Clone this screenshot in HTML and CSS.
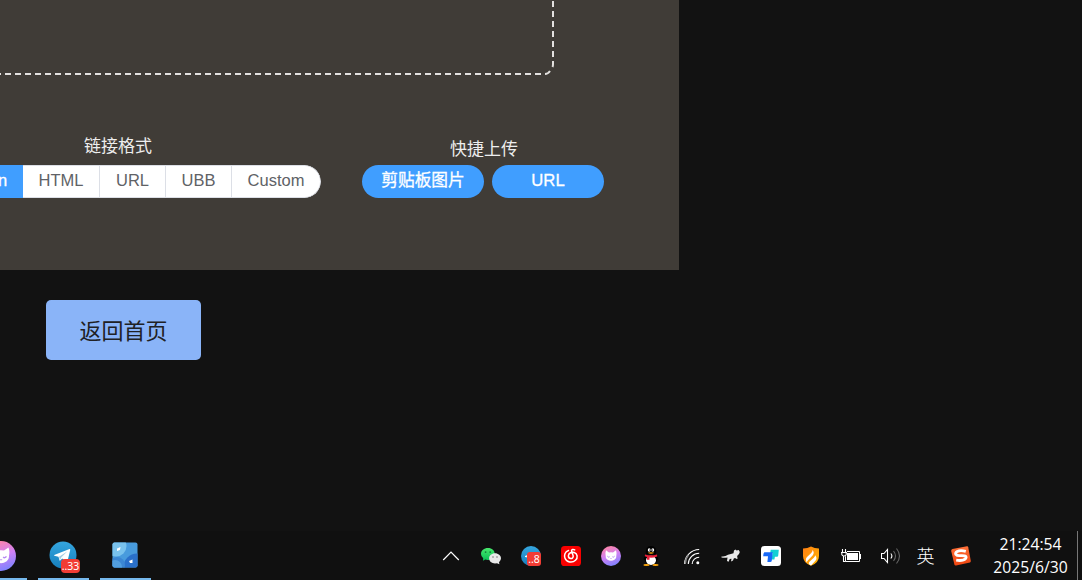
FILE: index.html
```
<!DOCTYPE html>
<html lang="zh-CN">
<head>
<meta charset="utf-8">
<title>PicGo</title>
<link rel="stylesheet" href="styles.css">
</head>
<body>
<div class="screen">
  <main class="page">
    <section class="panel">
      <svg class="dropzone" width="554" height="75" viewBox="0 0 554 75"><path class="dashes" d="M553 1V58M541 74H0"/><path d="M553 61V64Q553 66 552.5 67M550 71Q548 74 545 74"/></svg>
      <div class="options">
        <div class="group formats">
          <div class="label">链接格式</div>
          <div class="segments">
            <span class="seg active">n</span><span class="seg html">HTML</span><span class="seg">URL</span><span class="seg">UBB</span><span class="seg last">Custom</span>
          </div>
        </div>
        <div class="group quick">
          <div class="label low">快捷上传</div>
          <div class="buttons"><span class="pill wide">剪贴板图片</span><span class="pill">URL</span></div>
        </div>
      </div>
    </section>
    <div class="home">返回首页</div>
  </main>
  <footer class="taskbar">
    <svg width="0" height="0" class="defs"><defs>
      <linearGradient id="cat" x1="0.3" y1="0" x2="0.65" y2="1"><stop offset="0" stop-color="#ff85a5"/><stop offset=".5" stop-color="#cf80f5"/><stop offset="1" stop-color="#7b83ff"/></linearGradient>
      <linearGradient id="tg" x1="0" y1="0" x2="0" y2="1"><stop offset="0" stop-color="#35a6df"/><stop offset="1" stop-color="#167fbd"/></linearGradient>
      <linearGradient id="fire" x1="0" y1="0" x2="1" y2="1"><stop offset="0" stop-color="#ff7d14"/><stop offset="1" stop-color="#ffb800"/></linearGradient>
      <linearGradient id="wx" x1="0" y1="0" x2="0" y2="1"><stop offset="0" stop-color="#48e86c"/><stop offset="1" stop-color="#08bd56"/></linearGradient>
      <linearGradient id="sg" x1="0" y1="0" x2="0" y2="1"><stop offset="0" stop-color="#ff7038"/><stop offset="1" stop-color="#ee4611"/></linearGradient>
      <symbol id="catface" viewBox="0 0 20 20"><circle cx="10" cy="10" r="10" fill="url(#cat)"/><path d="M5 4.3L8 6.4Q10 6 12 6.4L15 4.3Q16 7 15.3 10Q15.6 12 13.8 13.5Q10 16 6.2 13.5Q4.4 12 4.7 10Q4 7 5 4.3Z" fill="#fff"/><path d="M6.4 10.2Q7.4 11.7 8.6 10.8M11.4 10.8Q12.6 11.7 13.6 10.2" fill="none" stroke="#b68af2" stroke-width="1"/><path d="M9.2 12.5H10.8" stroke="#c0a0ef" stroke-width=".7"/></symbol>
    </defs></svg>
    <div class="apps">
      <div class="app first"><svg width="30" height="30"><use href="#catface"/></svg></div>
      <div class="app">
        <svg width="28" height="28" viewBox="0 0 28 28"><circle cx="14" cy="14" r="13.5" fill="url(#tg)"/><path d="M5.2 14L20.5 8Q21.4 7.8 21.2 8.9L18.5 20.2Q18.2 21.3 17.2 20.6L13.2 17.6L11.2 19.5Q10.5 20 10.4 19L9.5 15.8L5.2 14.8Z" fill="#fff"/><path d="M10 15.8L18.5 10.3L12.2 16.5L11 19" fill="#a9cfe4"/></svg>
        <span class="badge">..33</span>
      </div>
      <div class="app">
        <svg width="26" height="26" viewBox="0 0 26 26"><defs><clipPath id="tile"><rect x=".5" y=".5" width="25" height="25" rx="2"/></clipPath></defs><g clip-path="url(#tile)"><rect width="26" height="26" fill="#489bdd"/><circle cx="4" cy="4" r="10.5" fill="#79c2ed"/><circle cx="25" cy="25" r="13.5" fill="#2a70ca"/><circle cx="5" cy="23" r="8" fill="#3b86d3"/><circle cx="3" cy="25" r="7" fill="#529fdf"/><path d="M5 6.5L8.5 5L8 8L5 9ZM17 19L20.5 17.5V21L18 21Z" fill="#fff"/></g></svg>
      </div>
    </div>
    <div class="tray">
      <div class="cell"><svg width="20" height="20" viewBox="0 0 20 20"><path d="M2.2 14L10 6.2L17.8 14" fill="none" stroke="#fff" stroke-width="1.2"/></svg></div>
      <div class="cell"><svg width="20" height="20" viewBox="0 0 20 20"><path d="M7 2C3 2 0 4.5 0 8Q0 10.6 2.2 12.3L2 14.8L4.3 13.6Q7 14.3 9.5 13.4C12.5 12.5 13.7 10 13.7 8C13.7 4.5 11 2 7 2Z" fill="url(#wx)"/><circle cx="4.6" cy="6.1" r=".9" fill="#137a3b"/><circle cx="9.2" cy="6.1" r=".9" fill="#137a3b"/><path d="M14 7.2C10.7 7.2 8.1 9.5 8.1 12.3S10.7 17.5 14 17.5L16 17.2L18.4 18.3L18 16.2Q20 14.8 20 12.3C20 9.5 17.3 7.2 14 7.2Z" fill="#e8e8e8"/><circle cx="12" cy="11" r=".8" fill="#777"/><circle cx="16" cy="11" r=".8" fill="#777"/></svg></div>
      <div class="cell"><svg width="20" height="20" viewBox="0 0 20 20"><circle cx="10" cy="10" r="10" fill="url(#tg)"/><path d="M4 10L9 8V12L4 11Z" fill="#fff"/></svg><span class="badge small">..8</span></div>
      <div class="cell"><svg width="20" height="20" viewBox="0 0 20 20"><rect width="20" height="20" rx="3.6" fill="#f90000"/><path d="M7.5 4.5C3.8 5.8 2.9 9.4 4 12.2C5.6 16.5 11.3 17.3 14.5 14.3C17.2 11.8 16.5 7.5 13.3 6.5C10.7 5.8 7.8 6.8 7.4 9.5C7.1 13.2 12.2 13.6 12.2 10.3C12.1 8.7 10.5 6.3 10.5 4.8C10.5 3.3 12.3 3 13.7 3.9" fill="none" stroke="#fff" stroke-width="1.5" stroke-linecap="round"/></svg></div>
      <div class="cell"><svg width="20" height="20"><use href="#catface"/></svg></div>
      <div class="cell"><svg width="20" height="20" viewBox="0 0 20 20"><ellipse cx="10" cy="14" rx="6.2" ry="5" fill="#000"/><path d="M5 9Q1.8 12 3 14Q4 14 5 12M15 9Q18.2 12 17 14Q16 14 15 12" fill="#000"/><ellipse cx="10" cy="14.3" rx="5" ry="4.6" fill="#fff"/><path d="M4.8 8.4Q4 0 10 0T15.2 8.4Z" fill="#000"/><ellipse cx="8.2" cy="4" rx="1.4" ry="1.7" fill="#fff"/><ellipse cx="11.8" cy="4" rx="1.4" ry="1.7" fill="#fff"/><circle cx="8.5" cy="4.1" r=".5"/><circle cx="11.5" cy="4.1" r=".5"/><path d="M6.6 6.8Q10 5.6 13.4 6.8Q10 8.7 6.6 6.8" fill="#ffad13"/><path d="M4 8.4Q10 10.2 16 8.4L16.2 10.5Q12 12 8.5 11.6V13.8H6V11L3.8 10.2Z" fill="#e9203a"/><ellipse cx="5.5" cy="19" rx="3.2" ry="1" fill="#ffa90e"/><ellipse cx="14.5" cy="19" rx="3.2" ry="1" fill="#ffa90e"/></svg></div>
      <div class="cell"><svg width="20" height="20" viewBox="0 0 20 20"><g fill="none" stroke="#fff" stroke-width="1.1"><path d="M3.5 18A15 15 0 0 1 18.2 3.5M7.3 18A11 11 0 0 1 18.2 7.3M11.2 18A7 7 0 0 1 18.2 11.2"/></g><path d="M3.5 18A15 15 0 0 1 7 8.5L8 9.5A13 13 0 0 0 5 18Z" fill="#888"/><circle cx="16.8" cy="16.7" r="1.5" fill="#fff"/></svg></div>
      <div class="cell"><svg width="20" height="20" viewBox="0 0 20 20"><path d="M.5 10.4Q4 11 7 8.7Q10 7.8 12.5 7.2L13 4.5L14.5 3.5L15.5 4.5L17.7 4L18.8 6L18 8L16.5 9.4L16 11.2L17 12L15.8 13L14 12L12.8 12.5L12 14.6L10 15.6L10.5 12.8L8.7 12.9L7.6 15.7L6 15L6.5 11.4Q3.5 12 .5 11.4Z" fill="#e8e8e8"/></svg></div>
      <div class="cell"><svg width="20" height="20" viewBox="0 0 20 20"><rect width="20" height="20" rx="3.5" fill="#fff"/><path d="M9.7 3.7H17.8L17.2 9.7Q17 10.7 16 10.7H13.9L13.4 13.5H10.5L11.5 7H9.2Z" fill="#12cfd4"/><path d="M3.3 6.3H11.7L10.8 14.5Q10.6 16 9.2 16H6.4L7 10.3H2.2Q2.2 7.1 3.3 6.3Z" fill="#1768f7"/></svg></div>
      <div class="cell"><svg width="20" height="20" viewBox="0 0 20 20"><path d="M10 .4Q13.5 2.4 18 2.4V10Q18 16.8 10 19.8Q2 16.8 2 10V2.4Q6.5 2.4 10 .4Z" fill="url(#fire)"/><path d="M11.5 4Q13.8 6.5 11.8 9.2L7 14.2Q5.8 15.3 5.8 16.6Q3.8 13.2 6 11L10 7.3Q11.6 6 11.5 4ZM14.2 9.2Q16.8 12.2 14.2 15L10 19.4Q6.8 18.2 8.2 16L12.8 11.7Q14 10.6 14.2 9.2Z" fill="#fff"/></svg></div>
      <div class="cell"><svg width="20" height="20" viewBox="0 0 20 20"><path d="M4.5 5.5H18.5V15.5H4.5Z" fill="none" stroke="#fff"/><path d="M6 7H17V14H6Z" fill="#fff"/><path d="M19 8H20V13H19Z" fill="#fff"/><path d="M0 4H6V8.6Q5.2 10.6 4 10.6V15H1.8V10.6Q.3 10 0 8Z" fill="#101010"/><path d="M1.5 3V6M4.5 3V6M0 6.5H6M.8 7V8.5Q1 10 3 10T5.2 8.5V7M2.5 10V15.5H4.5" fill="none" stroke="#fff" stroke-width="1.1"/></svg></div>
      <div class="cell"><svg width="20" height="20" viewBox="0 0 20 20"><path d="M.5 7.5H3L6.5 3.5V16.5L3 12.5H.5Z" fill="none" stroke="#fff" stroke-width="1.1"/><path d="M9.8 7.5Q12 10 9.8 12.5" fill="none" stroke="#fff" stroke-width="1.1"/><path d="M12.5 5Q16.5 10 12.5 15M15.5 2.5Q21.5 10 15.5 17.5" fill="none" stroke="#666" stroke-width="1.1"/></svg></div>
      <div class="cell ime">英</div>
      <div class="cell"><svg width="20" height="20" viewBox="0 0 20 20"><path d="M1.5 3L16 .3Q17 .2 17.2 1.2L19.8 14.8Q20 16 19 16.4L5 19.4Q3.8 19.6 3.4 18.5L.2 5Q0 3.5 1.5 3Z" fill="url(#sg)"/><path d="M14.8 5.4Q9.5 3.8 6.2 5.5C2.8 7.5 5.2 9.8 8.5 9.7C12.2 9.4 16.4 9.6 14.8 12.3Q12.3 15.3 5.2 14.2" fill="none" stroke="#fff" stroke-width="2.8"/></svg></div>
      <div class="clock"><span>21:24:54</span><span>2025/6/30</span></div>
    </div>
  </footer>
</div>
</body>
</html>
```
FILE: styles.css
```
* { box-sizing: border-box; }
body { margin: 0; background: #121212; }
.screen { width: 1082px; height: 580px; display: flex; flex-direction: column; overflow: hidden; background: #121212; font-family: "Liberation Sans", "Noto Sans CJK SC", sans-serif; }
svg { display: block; flex: none; }
.page { flex: 1; }
.panel { width: 679px; height: 270px; background: #403c37; }
.dropzone path { fill: none; stroke: #e3e1df; stroke-width: 2; }
.dropzone .dashes { stroke-dasharray: 6 4; }
.options { display: flex; gap: 41px; padding-top: 57px; }
.group { display: flex; flex-direction: column; }
.formats { width: 321px; }
.label { height: 33px; line-height: 29px; font-size: 17px; color: #eee; }
.formats .label { padding-left: 84px; }
.label.low { padding-left: 88px; line-height: 35px; }
.segments { display: flex; height: 33px; border-radius: 0 17px 17px 0; overflow: hidden; }
.seg { width: 66px; display: flex; justify-content: center; padding-top: 5px; line-height: 19px; font-size: 16.5px; color: #606266; background: #fff; border: 1px solid #dcdfe6; border-left: 0; }
.seg.active { width: 23px; justify-content: flex-start; color: #fff; background: #409eff; border-color: #409eff; -webkit-text-stroke: 0.3px #fff; text-indent: -2px; }
.seg.html { width: 77px; }
.seg.last { width: 89px; border-radius: 0 17px 17px 0; }
.buttons { display: flex; gap: 8px; }
.pill { width: 112px; height: 33px; border-radius: 17px; background: #409eff; color: #fff; display: flex; justify-content: center; padding-top: 6px; line-height: 19px; font-size: 16.7px; -webkit-text-stroke: 0.3px #fff; }
.pill.wide { width: 122px; }
.home { margin: 30px 0 0 46px; width: 155px; height: 60px; border-radius: 5px; background: #8ab4f8; color: #202124; font-size: 22px; line-height: 64px; text-align: center; }
.taskbar { height: 49px; background: #101010; display: flex; justify-content: space-between; }
.defs { position: absolute; }
.apps { display: flex; gap: 11px; }
.app { position: relative; width: 51px; height: 49px; border-bottom: 2px solid #76b9ed; display: flex; align-items: center; justify-content: center; padding: 1px 2px 0 0; }
.app.first { width: 27px; justify-content: flex-start; padding-top: 2px; }
.app.first svg { margin-left: -14px; }
.badge { position: absolute; left: 23px; top: 28px; width: 19px; height: 14px; border-radius: 4px; background: #f23c34; color: #fff; font: 10.5px/14px "Noto Sans", sans-serif; text-align: center; }
.badge.small { left: 16px; top: 21px; width: 14px; height: 14px; border-radius: 3px; font-size: 10.5px; }
.tray { display: flex; }
.cell { position: relative; width: 40px; height: 49px; display: flex; align-items: center; justify-content: center; padding-top: 1px; }
.cell.ime { width: 30px; padding: 0 1px 1px 0; font: 300 18px/20px "Noto Sans CJK SC", sans-serif; color: #fff; }
.clock { width: 97px; height: 49px; margin-right: 4px; border-right: 1px solid #777; display: flex; flex-direction: column; align-items: center; padding: 2px 0 0 3px; color: #fff; font: 15.7px/23px "Open Sans", "Noto Sans", sans-serif; }
```
